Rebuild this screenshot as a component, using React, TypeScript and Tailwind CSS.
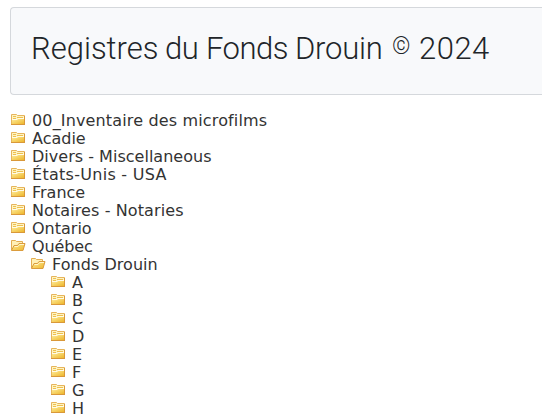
interface Folder {
  name: string;
  tracking?: string;
  children?: Folder[];
}

const folders: Folder[] = [
  { name: "00_Inventaire des microfilms", tracking: "tracking-[0.15px]" },
  { name: "Acadie" },
  { name: "Divers - Miscellaneous", tracking: "tracking-[0.02px]" },
  { name: "États-Unis - USA", tracking: "tracking-[0.28px]" },
  { name: "France" },
  { name: "Notaires - Notaries", tracking: "tracking-[0.1px]" },
  { name: "Ontario" },
  {
    name: "Québec",
    tracking: "tracking-[-0.1px]",
    children: [
      {
        name: "Fonds Drouin",
        tracking: "tracking-[0.05px]",
        children: ["A", "B", "C", "D", "E", "F", "G", "H"].map((name) => ({ name })),
      },
    ],
  },
];

function ClosedFolderIcon() {
  return (
    <svg width="16" height="16" viewBox="0 0 16 16" className="shrink-0">
      <path d="M1.5 2.5h5l1 1h7v9h-13z" fill="#fff3c0" stroke="#e6b55c" />
      <path d="M3 4h3v1H3zM3 6h3v1H3zM7 5h6v1H7z" fill="#edc050" />
      <path d="M2 8h5l1-1h6v5H2z" fill="url(#folder-front)" />
      <path d="M2 7.5h5l1-1h6" fill="none" stroke="#fffbe8" />
      <path d="M1 12.5h14M14.5 4v9" stroke="#d9983a" />
    </svg>
  );
}

function OpenFolderIcon() {
  return (
    <svg width="16" height="16" viewBox="0 0 16 16" className="shrink-0">
      <path d="M1.5 12V2.5h4l1 1h6V6" fill="#fff0b5" stroke="#e3ad50" />
      <path d="M1.5 12.5l2.5-5h3.5l1.5-2h6l-2 7z" fill="url(#folder-front)" stroke="#db9c3d" />
      <path d="M4.5 8.5H8l1.5-2h4.5" fill="none" stroke="#fff7cb" />
    </svg>
  );
}

function FolderTree({ items }: { items: Folder[] }) {
  return (
    <ul>
      {items.map((item) => (
        <li key={item.name}>
          <div className="flex h-[18px] items-center gap-1.5 whitespace-nowrap">
            {item.children ? <OpenFolderIcon /> : <ClosedFolderIcon />}
            <span className={`pt-0.5 ${item.tracking ?? ""}`}>{item.name}</span>
          </div>
          {item.children && (
            <div className="pl-5">
              <FolderTree items={item.children} />
            </div>
          )}
        </li>
      ))}
    </ul>
  );
}

export default function App() {
  return (
    <div className="h-[417px] w-[542px] overflow-hidden bg-white pl-2.5 pt-[7px]">
      {/* Shared gradient for the folder fronts */}
      <svg width="0" height="0" className="absolute">
        <defs>
          <linearGradient id="folder-front" x1="0" y1="0" x2="1" y2="1">
            <stop offset="0" stopColor="#ffec98" />
            <stop offset="1" stopColor="#edb62c" />
          </linearGradient>
        </defs>
      </svg>
      <header className="flex h-[88px] items-center rounded-l border border-r-0 border-[#d5d8dc] bg-[#f8f9fb] pl-5">
        <h1 className="flex whitespace-nowrap pb-1.5 font-['Roboto',sans-serif] text-[31px] font-light leading-none text-[#212529]">
          <span className="w-[134px]">Registres </span>
          <span className="w-[41px] tracking-[-0.4px]">du </span>
          <span className="w-[89px] tracking-[-0.5px]">Fonds </span>
          <span className="w-[97px] tracking-[-0.2px]">Drouin </span>
          <span className="w-[27px] text-[23px] leading-[28px]">© </span>
          <span className="tracking-[0.5px]">2024</span>
        </h1>
      </header>
      <main className="mt-4 font-['DejaVu_Sans',sans-serif] text-base leading-[18px] text-[#333]">
        <FolderTree items={folders} />
      </main>
    </div>
  );
}
